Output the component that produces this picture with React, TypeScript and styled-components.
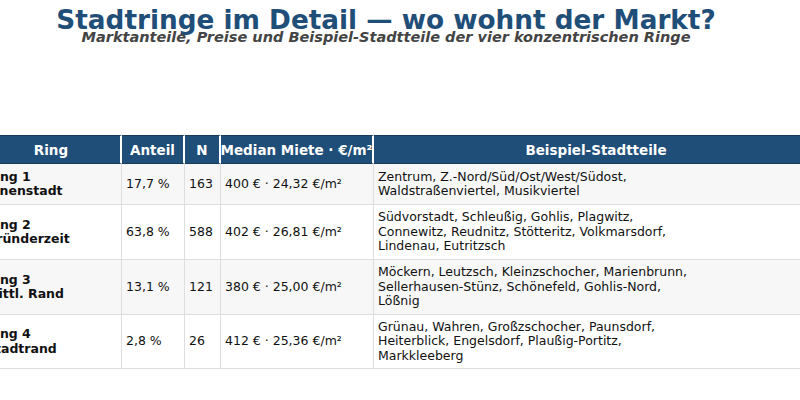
import React from "react";
import styled, { createGlobalStyle } from "styled-components";

const GlobalStyle = createGlobalStyle`
  html, body {
    margin: 0;
    padding: 0;
    background: #ffffff;
    overflow: hidden;
  }
  body {
    font-family: "DejaVu Sans", "Liberation Sans", sans-serif;
  }
`;

const Page = styled.div`
  width: 800px;
  height: 400px;
  overflow: hidden;
  display: flex;
  flex-direction: column;
`;

const Heading = styled.div`
  width: 772px;
  display: flex;
  flex-direction: column;
  align-items: center;
  padding-top: 5px;
`;

const Title = styled.h1`
  margin: 0;
  font-size: 26.3px;
  line-height: 30px;
  font-weight: bold;
  color: #1f4e79;
  white-space: nowrap;
`;

const Subtitle = styled.h2`
  margin: -6px 0 0;
  font-size: 14.5px;
  line-height: 16px;
  font-weight: bold;
  font-style: italic;
  color: #444444;
  white-space: nowrap;
`;

const Table = styled.div`
  margin: 90px 0 0 -18px;
  width: 838px;
  display: flex;
  flex-direction: column;
`;

const columns = "140px 63px 36px 153px 446px";

const Row = styled.div<{ $height: number; $shaded?: boolean }>`
  display: grid;
  grid-template-columns: ${columns};
  height: ${({ $height }) => $height}px;
  background: ${({ $shaded }) => ($shaded ? "#f7f7f7" : "#ffffff")};
  border-bottom: 1px solid #dedede;
  box-sizing: border-box;
`;

const HeadRow = styled.div`
  display: grid;
  grid-template-columns: ${columns};
  height: 29px;
  box-sizing: border-box;
`;

const HeadCell = styled.div`
  background: #1f4e79;
  border-top: 1px solid #163a5c;
  border-bottom: 1px solid #163a5c;
  border-right: 2px solid #ffffff;
  box-sizing: border-box;
  display: flex;
  align-items: center;
  justify-content: center;
  overflow: hidden;
  color: #ffffff;
  font-size: 13.5px;
  font-weight: bold;
  white-space: nowrap;
`;

const Cell = styled.div<{ $bold?: boolean }>`
  border-right: 1px solid #dedede;
  box-sizing: border-box;
  display: flex;
  align-items: center;
  padding: 0 4px;
  overflow: hidden;
  font-size: 12.5px;
  line-height: 14.5px;
  color: #111111;
  font-weight: ${({ $bold }) => ($bold ? "bold" : "normal")};
  white-space: pre-line;
`;

type RingRow = {
  ring: string;
  share: string;
  n: string;
  rent: string;
  districts: string;
  height: number;
};

const rows: RingRow[] = [
  {
    ring: "Ring 1\nInnenstadt",
    share: "17,7 %",
    n: "163",
    rent: "400 € · 24,32 €/m²",
    districts: "Zentrum, Z.-Nord/Süd/Ost/West/Südost,\nWaldstraßenviertel, Musikviertel",
    height: 41,
  },
  {
    ring: "Ring 2\nGründerzeit",
    share: "63,8 %",
    n: "588",
    rent: "402 € · 26,81 €/m²",
    districts:
      "Südvorstadt, Schleußig, Gohlis, Plagwitz,\nConnewitz, Reudnitz, Stötteritz, Volkmarsdorf,\nLindenau, Eutritzsch",
    height: 55,
  },
  {
    ring: "Ring 3\nMittl. Rand",
    share: "13,1 %",
    n: "121",
    rent: "380 € · 25,00 €/m²",
    districts:
      "Möckern, Leutzsch, Kleinzschocher, Marienbrunn,\nSellerhausen-Stünz, Schönefeld, Gohlis-Nord,\nLößnig",
    height: 55,
  },
  {
    ring: "Ring 4\nStadtrand",
    share: "2,8 %",
    n: "26",
    rent: "412 € · 25,36 €/m²",
    districts:
      "Grünau, Wahren, Großzschocher, Paunsdorf,\nHeiterblick, Engelsdorf, Plaußig-Portitz,\nMarkkleeberg",
    height: 54,
  },
];

const headers = ["Ring", "Anteil", "N", "Median Miete · €/m²", "Beispiel-Stadtteile"];

export default function App() {
  return (
    <Page>
      <GlobalStyle />
      <Heading>
        <Title>Stadtringe im Detail — wo wohnt der Markt?</Title>
        <Subtitle>
          Marktanteile, Preise und Beispiel-Stadtteile der vier konzentrischen Ringe
        </Subtitle>
      </Heading>
      <Table>
        <HeadRow>
          {headers.map((h) => (
            <HeadCell key={h}>{h}</HeadCell>
          ))}
        </HeadRow>
        {rows.map((r, i) => (
          <Row key={r.ring} $height={r.height} $shaded={i % 2 === 0}>
            <Cell $bold>{r.ring}</Cell>
            <Cell>{r.share}</Cell>
            <Cell>{r.n}</Cell>
            <Cell>{r.rent}</Cell>
            <Cell>{r.districts}</Cell>
          </Row>
        ))}
      </Table>
    </Page>
  );
}
